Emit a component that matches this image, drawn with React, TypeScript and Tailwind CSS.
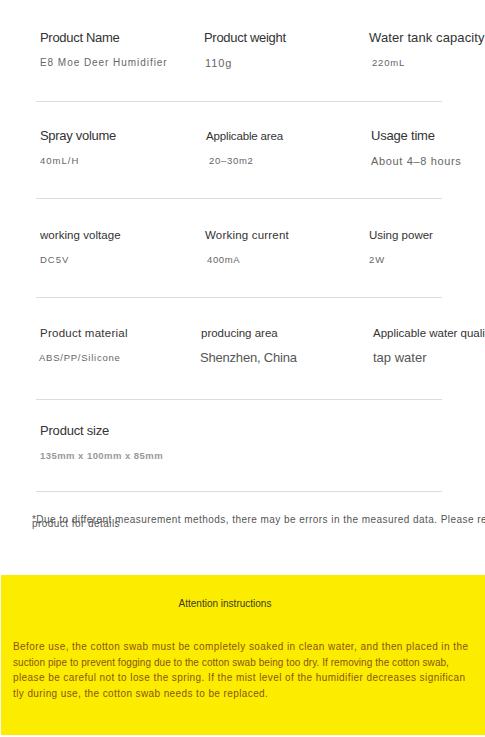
import React from 'react';

type Cell = { label: string; value: string; labelCls: string; valueCls: string };
type Row = { pad: string; cells: Cell[] };

const LABEL = 'text-[#333] leading-[20px] whitespace-nowrap';
const VALUE = 'mt-[7px] leading-[16px] whitespace-nowrap';

const ROWS: Row[] = [
  {
    pad: 'pt-[28px] pb-[30px]',
    cells: [
      { label: 'Product Name', value: 'E8 Moe Deer Humidifier', labelCls: 'text-[13px] tracking-[-0.3px]', valueCls: 'text-[10px] tracking-[0.95px] text-[#666]' },
      { label: 'Product weight', value: '110g', labelCls: 'text-[13px] tracking-[-0.3px]', valueCls: 'text-[11px] tracking-[0.9px] text-[#666] pl-px' },
      { label: 'Water tank capacity', value: '220mL', labelCls: 'text-[13px] tracking-[0.1px] pl-px', valueCls: 'text-[9.5px] tracking-[0.8px] text-[#666] pl-[4px]' },
    ],
  },
  {
    pad: 'pt-[24px] pb-[29px]',
    cells: [
      { label: 'Spray volume', value: '40mL/H', labelCls: 'text-[13px] tracking-[-0.3px]', valueCls: 'text-[9.5px] tracking-[1px] text-[#666]' },
      { label: 'Applicable area', value: '20–30m2', labelCls: 'text-[11.5px] tracking-[-0.15px] pl-[2px]', valueCls: 'text-[9.5px] tracking-[0.7px] text-[#666] pl-[5px]' },
      { label: 'Usage time', value: 'About 4–8 hours', labelCls: 'text-[13px] tracking-[-0.2px] pl-[3px]', valueCls: 'text-[11px] tracking-[0.65px] text-[#666] pl-[3px]' },
    ],
  },
  {
    pad: 'pt-[26px] pb-[29px]',
    cells: [
      { label: 'working voltage', value: 'DC5V', labelCls: 'text-[11.5px] tracking-[0.05px]', valueCls: 'text-[9.5px] tracking-[1px] text-[#666]' },
      { label: 'Working current', value: '400mA', labelCls: 'text-[11.5px] tracking-[0.2px] pl-px', valueCls: 'text-[9.5px] tracking-[0.6px] text-[#666] pl-[3px]' },
      { label: 'Using power', value: '2W', labelCls: 'text-[11.5px] pl-px', valueCls: 'text-[9.5px] tracking-[1px] text-[#666] pl-px' },
    ],
  },
  {
    pad: 'pt-[25px] pb-[33px]',
    cells: [
      { label: 'Product material', value: 'ABS/PP/Silicone', labelCls: 'text-[11.5px] tracking-[0.25px]', valueCls: 'text-[9.5px] tracking-[0.75px] text-[#666] -ml-px' },
      { label: 'producing area', value: 'Shenzhen, China', labelCls: 'text-[11.5px] -ml-[3px]', valueCls: 'text-[13px] tracking-[-0.2px] text-[#555] -ml-[4px]' },
      { label: 'Applicable water quality', value: 'tap water', labelCls: 'text-[11.5px] pl-[5px]', valueCls: 'text-[13px] tracking-[0px] text-[#555] pl-[5px]' },
    ],
  },
  {
    pad: 'pt-[21px] pb-[27px]',
    cells: [
      { label: 'Product size', value: '135mm x 100mm x 85mm', labelCls: 'text-[13px] tracking-[-0.2px]', valueCls: 'text-[9.5px] tracking-[0.45px] font-bold text-[#999]' },
    ],
  },
];

const NOTICE = [
  { text: 'Before use, the cotton swab must be completely soaked in clean water, and then placed in the', cls: 'tracking-[0.43px]' },
  { text: 'suction pipe to prevent fogging due to the cotton swab being too dry. If removing the cotton swab,', cls: 'tracking-[0.06px]' },
  { text: 'please be careful not to lose the spring. If the mist level of the humidifier decreases significan', cls: 'tracking-[0.42px]' },
  { text: 'tly during use, the cotton swab needs to be replaced.', cls: 'tracking-[0.4px]' },
];

export default function App() {
  return (
    <div className="w-[485px] h-[737px] overflow-hidden bg-white font-['Liberation_Sans',Arial,sans-serif]">
      {/* 規格表 */}
      <div className="w-[700px]">
        {ROWS.map((row, i) => (
          <div key={i}>
            <div className={`flex pl-[40px] ${row.pad}`}>
              {row.cells.map((cell) => (
                <div key={cell.label} className="w-[164px] flex flex-col">
                  <span className={`${LABEL} ${cell.labelCls}`}>{cell.label}</span>
                  <span className={`${VALUE} ${cell.valueCls}`}>{cell.value}</span>
                </div>
              ))}
            </div>
            <div className="ml-[36px] w-[406px] h-px bg-[#dcdcdc]" />
          </div>
        ))}
      </div>

      {/* 注記 */}
      <div className="pl-[32px] pt-[26px] text-[10px] tracking-[0.45px] text-[#555] leading-[4px] whitespace-nowrap">
        <div>*Due to different measurement methods, there may be errors in the measured data. Please refer to the actual</div>
        <div>product for details</div>
      </div>

      {/* 注意事項 */}
      <div className="mt-[49px] ml-px h-[160px] bg-[#fcec00] pt-[22px]">
        <div className="text-center pr-[36px] text-[10px] leading-[14px] text-[#3a3a20]">Attention instructions</div>
        <div className="mt-[28px] pl-[12px] text-[10px] leading-[15.7px] text-[#8a5512] whitespace-nowrap">
          {NOTICE.map((line) => (
            <div key={line.text} className={line.cls}>{line.text}</div>
          ))}
        </div>
      </div>
    </div>
  );
}
